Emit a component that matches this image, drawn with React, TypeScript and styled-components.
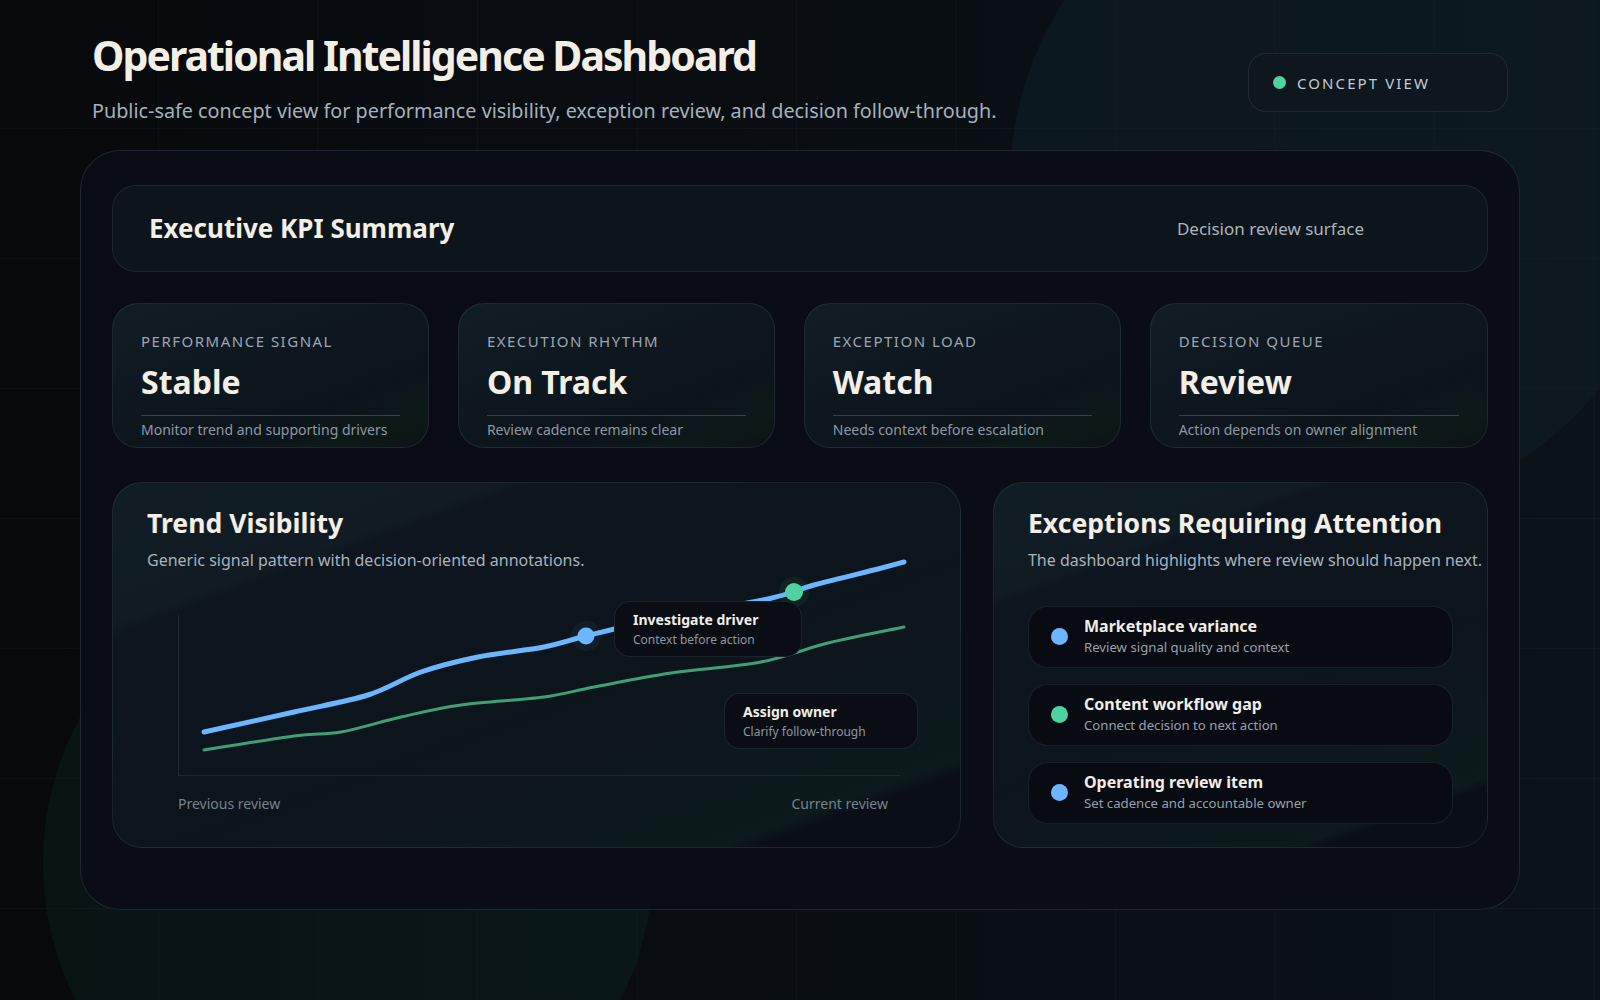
import React from "react";
import styled, { createGlobalStyle } from "styled-components";

const GlobalStyle = createGlobalStyle`
  * { box-sizing: border-box; }
  html, body { margin: 0; padding: 0; background: #080b0f; }
  body {
    font-family: "Noto Sans", "Open Sans", sans-serif;
    -webkit-font-smoothing: antialiased;
  }
`;

const Page = styled.div`
  position: relative;
  width: 1600px;
  height: 1000px;
  overflow: hidden;
  padding: 31px 80px 0;
  background-color: #080b0f;
  background-image:
    linear-gradient(rgba(255, 255, 255, 0.022) 1px, transparent 1px),
    linear-gradient(90deg, rgba(255, 255, 255, 0.022) 1px, transparent 1px),
    linear-gradient(90deg, #07090c 0%, #090d12 45%, #0b1318 100%);
  background-size: 159.5px 130px, 159.5px 130px, 100% 100%;
  background-position: 0 -2px, -1.5px 0, 0 0;
`;

const Orb = styled.div<{ $x: number; $y: number; $r: number; $color: string }>`
  position: absolute;
  left: ${(p) => p.$x - p.$r}px;
  top: ${(p) => p.$y - p.$r}px;
  width: ${(p) => p.$r * 2}px;
  height: ${(p) => p.$r * 2}px;
  border-radius: 50%;
  background: ${(p) => p.$color};
  pointer-events: none;
  z-index: 0;
`;

const Header = styled.header`
  position: relative;
  z-index: 1;
  display: flex;
  justify-content: space-between;
  align-items: flex-start;
  padding: 0 12px;
  margin-bottom: 26px;
`;

const TitleBlock = styled.div`
  display: flex;
  flex-direction: column;
`;

const Title = styled.h1`
  margin: 0;
  font-size: 41px;
  line-height: 48px;
  font-weight: 700;
  letter-spacing: -0.048em;
  color: #f3efe6;
`;

const Subtitle = styled.p`
  margin: 19px 0 0;
  font-size: 19.8px;
  line-height: 26px;
  color: #a6b1bc;
  white-space: nowrap;
`;

const Pill = styled.div`
  margin-top: 22px;
  width: 260px;
  height: 59px;
  display: flex;
  align-items: center;
  gap: 11px;
  padding: 0 24px;
  border-radius: 18px;
  border: 1px solid rgba(120, 150, 170, 0.16);
  background: rgba(13, 23, 30, 0.75);
`;

const Dot = styled.span<{ $color: string; $size: number }>`
  flex: none;
  width: ${(p) => p.$size}px;
  height: ${(p) => p.$size}px;
  border-radius: 50%;
  background: ${(p) => p.$color};
`;

const PillText = styled.span`
  font-size: 15px;
  letter-spacing: 0.14em;
  color: #c3ccd4;
`;

const Panel = styled.main`
  position: relative;
  z-index: 1;
  display: flex;
  flex-direction: column;
  height: 760px;
  padding: 34px 31px;
  border: 1px solid rgba(110, 140, 160, 0.2);
  border-radius: 40px;
  background: rgba(11, 13, 22, 0.95);
`;

const SummaryBar = styled.section`
  display: flex;
  align-items: center;
  justify-content: space-between;
  height: 87px;
  padding: 0 123px 0 36px;
  border-radius: 24px;
  border: 1px solid rgba(120, 150, 170, 0.14);
  background: linear-gradient(90deg, #0d141b 0%, #0d151c 100%);
  margin-bottom: 31px;
`;

const SummaryTitle = styled.h2`
  margin: 0;
  font-size: 26px;
  line-height: 31px;
  font-weight: 700;
  color: #f3efe6;
`;

const SummaryNote = styled.span`
  font-size: 17px;
  color: #aab4be;
`;

const KpiGrid = styled.section`
  display: grid;
  grid-template-columns: minmax(0, 1fr) minmax(0, 1fr) minmax(0, 1fr) minmax(0, 1.066fr);
  gap: 28.5px;
  height: 145px;
  margin-bottom: 34px;
`;

const KpiCard = styled.article`
  display: flex;
  flex-direction: column;
  padding: 28px 28px 0;
  border-radius: 26px;
  border: 1px solid rgba(120, 150, 170, 0.15);
  background: linear-gradient(
    160deg,
    #111d25 0%,
    #0e1820 35%,
    #0c141b 70%,
    #0c1918 88%,
    #0b1117 100%
  );
`;

const KpiLabel = styled.div`
  font-size: 15px;
  line-height: 18px;
  letter-spacing: 0.1em;
  color: #9ba6b1;
`;

const KpiValue = styled.div`
  margin-top: 14px;
  font-size: 32px;
  line-height: 35px;
  font-weight: 700;
  color: #f3efe6;
`;

const KpiDivider = styled.div<{ $tone: "green" | "blue" }>`
  margin-top: 16px;
  height: 1px;
  background: ${(p) =>
    p.$tone === "green" ? "rgba(72, 140, 120, 0.45)" : "rgba(80, 120, 150, 0.45)"};
`;

const KpiSub = styled.div`
  margin-top: 5px;
  font-size: 14px;
  line-height: 18px;
  color: #8d98a3;
`;

const BottomGrid = styled.section`
  display: grid;
  grid-template-columns: minmax(0, 1.715fr) minmax(0, 1fr);
  gap: 32px;
  height: 366px;
`;

const BigCard = styled.article`
  display: flex;
  flex-direction: column;
  min-width: 0;
  padding: 25px 34px 0;
  border-radius: 30px;
  border: 1px solid rgba(120, 150, 170, 0.15);
  background: linear-gradient(
    160deg,
    #111d26 0%,
    #101b23 21%,
    #0d161e 23%,
    #0c151c 58%,
    #0c1a1b 87%,
    #0a0e15 89%,
    #0a0e15 100%
  );
`;

const CardTitle = styled.h3`
  margin: 0;
  font-size: 26.6px;
  line-height: 31px;
  font-weight: 700;
  color: #f3efe6;
  white-space: nowrap;
`;

const CardSub = styled.p`
  margin: 9.5px 0 0;
  font-size: 16px;
  line-height: 22px;
  color: #a8b2bc;
  white-space: nowrap;
`;

const ChartArea = styled.div`
  position: relative;
  margin: 44px 0 0 31px;
  width: 722px;
  height: 161px;
  border-left: 1px solid rgba(110, 135, 155, 0.18);
  border-bottom: 1px solid rgba(110, 135, 155, 0.18);
`;

const ChartSvg = styled.svg`
  position: absolute;
  left: 0;
  top: 0;
  overflow: visible;
`;

const Annotation = styled.div<{ $left: number; $top: number; $width: number }>`
  position: absolute;
  left: ${(p) => p.$left}px;
  top: ${(p) => p.$top}px;
  width: ${(p) => p.$width}px;
  height: 56px;
  padding: 9px 18px;
  border-radius: 16px;
  border: 1px solid rgba(120, 150, 170, 0.17);
  background: #0a0d14;
`;

const AnnoTitle = styled.div`
  font-size: 14px;
  line-height: 18px;
  font-weight: 700;
  color: #f1eee8;
`;

const AnnoSub = styled.div`
  margin-top: 2px;
  font-size: 12px;
  line-height: 17px;
  color: #8c97a2;
`;

const AxisLabels = styled.div`
  display: flex;
  justify-content: space-between;
  width: 722px;
  margin: 19.5px 0 0 31px;
  padding-right: 12px;
  font-size: 14px;
  line-height: 18px;
  color: #77828d;
`;

const ExceptionList = styled.ul`
  list-style: none;
  margin: 35px 0 0;
  padding: 0;
  display: flex;
  flex-direction: column;
  gap: 16px;
`;

const ExceptionRow = styled.li`
  display: flex;
  align-items: center;
  gap: 16px;
  height: 62px;
  padding: 0 22px;
  border-radius: 20px;
  border: 1px solid rgba(120, 150, 170, 0.15);
  background: #090b12;
`;

const RowText = styled.div`
  display: flex;
  flex-direction: column;
`;

const RowTitle = styled.div`
  font-size: 16px;
  line-height: 19.5px;
  font-weight: 700;
  color: #f1eee8;
`;

const RowSub = styled.div`
  margin-top: 3px;
  font-size: 13.2px;
  line-height: 17.5px;
  color: #96a0aa;
`;

type Pt = [number, number];

function smoothPath(pts: Pt[]): string {
  let d = `M ${pts[0][0]} ${pts[0][1]}`;
  for (let i = 0; i < pts.length - 1; i++) {
    const p0 = pts[i - 1] || pts[i];
    const p1 = pts[i];
    const p2 = pts[i + 1];
    const p3 = pts[i + 2] || p2;
    const c1x = p1[0] + (p2[0] - p0[0]) / 6;
    const c1y = p1[1] + (p2[1] - p0[1]) / 6;
    const c2x = p2[0] - (p3[0] - p1[0]) / 6;
    const c2y = p2[1] - (p3[1] - p1[1]) / 6;
    d += ` C ${c1x.toFixed(1)} ${c1y.toFixed(1)}, ${c2x.toFixed(1)} ${c2y.toFixed(1)}, ${p2[0]} ${p2[1]}`;
  }
  return d;
}

const bluePts: Pt[] = [
  [25, 117], [115, 97], [189, 80], [242, 57], [299, 42], [365, 32], [407, 21],
  [480, 4], [589, -16], [635, -30], [699, -46], [725, -53],
];

const greenPts: Pt[] = [
  [25, 135], [115, 121], [162, 117], [222, 102], [282, 90], [365, 82], [415, 72],
  [492, 58], [582, 47], [649, 28], [725, 12],
];

const kpis = [
  { label: "PERFORMANCE SIGNAL", value: "Stable", sub: "Monitor trend and supporting drivers", tone: "green" as const },
  { label: "EXECUTION RHYTHM", value: "On Track", sub: "Review cadence remains clear", tone: "blue" as const },
  { label: "EXCEPTION LOAD", value: "Watch", sub: "Needs context before escalation", tone: "blue" as const },
  { label: "DECISION QUEUE", value: "Review", sub: "Action depends on owner alignment", tone: "green" as const },
];

const exceptions = [
  { title: "Marketplace variance", sub: "Review signal quality and context", color: "#6cb6ff" },
  { title: "Content workflow gap", sub: "Connect decision to next action", color: "#4fd1a1" },
  { title: "Operating review item", sub: "Set cadence and accountable owner", color: "#6cb6ff" },
];

export default function App() {
  return (
    <>
      <GlobalStyle />
      <Page>
        <Orb $x={1341} $y={182} $r={331} $color="rgba(16, 34, 42, 0.45)" />
        <Orb $x={348} $y={863} $r={305} $color="rgba(14, 46, 40, 0.3)" />
        <Header>
          <TitleBlock>
            <Title>Operational Intelligence Dashboard</Title>
            <Subtitle>
              Public-safe concept view for performance visibility, exception review, and decision follow-through.
            </Subtitle>
          </TitleBlock>
          <Pill>
            <Dot $color="#4fd1a1" $size={13} />
            <PillText>CONCEPT VIEW</PillText>
          </Pill>
        </Header>

        <Panel>
          <SummaryBar>
            <SummaryTitle>Executive KPI Summary</SummaryTitle>
            <SummaryNote>Decision review surface</SummaryNote>
          </SummaryBar>

          <KpiGrid>
            {kpis.map((k) => (
              <KpiCard key={k.label}>
                <KpiLabel>{k.label}</KpiLabel>
                <KpiValue>{k.value}</KpiValue>
                <KpiDivider $tone={k.tone} />
                <KpiSub>{k.sub}</KpiSub>
              </KpiCard>
            ))}
          </KpiGrid>

          <BottomGrid>
            <BigCard>
              <CardTitle>Trend Visibility</CardTitle>
              <CardSub>Generic signal pattern with decision-oriented annotations.</CardSub>
              <ChartArea>
                <ChartSvg width={722} height={160}>
                  <path d={smoothPath(greenPts)} fill="none" stroke="#3f9f7a" strokeWidth={3} strokeLinecap="round" />
                  <path d={smoothPath(bluePts)} fill="none" stroke="#6cb6ff" strokeWidth={5} strokeLinecap="round" />
                  <circle cx={407} cy={21} r={15} fill="#6cb6ff" opacity={0.06} />
                  <circle cx={407} cy={21} r={8.5} fill="#6cb6ff" />
                  <circle cx={615} cy={-23} r={15} fill="#4fd1a1" opacity={0.07} />
                  <circle cx={615} cy={-23} r={9} fill="#4fd1a1" />
                </ChartSvg>
                <Annotation $left={435} $top={-14} $width={188}>
                  <AnnoTitle>Investigate driver</AnnoTitle>
                  <AnnoSub>Context before action</AnnoSub>
                </Annotation>
                <Annotation $left={545} $top={78} $width={194}>
                  <AnnoTitle>Assign owner</AnnoTitle>
                  <AnnoSub>Clarify follow-through</AnnoSub>
                </Annotation>
              </ChartArea>
              <AxisLabels>
                <span>Previous review</span>
                <span>Current review</span>
              </AxisLabels>
            </BigCard>

            <BigCard>
              <CardTitle>Exceptions Requiring Attention</CardTitle>
              <CardSub>The dashboard highlights where review should happen next.</CardSub>
              <ExceptionList>
                {exceptions.map((e) => (
                  <ExceptionRow key={e.title}>
                    <Dot $color={e.color} $size={17} />
                    <RowText>
                      <RowTitle>{e.title}</RowTitle>
                      <RowSub>{e.sub}</RowSub>
                    </RowText>
                  </ExceptionRow>
                ))}
              </ExceptionList>
            </BigCard>
          </BottomGrid>
        </Panel>
      </Page>
    </>
  );
}
